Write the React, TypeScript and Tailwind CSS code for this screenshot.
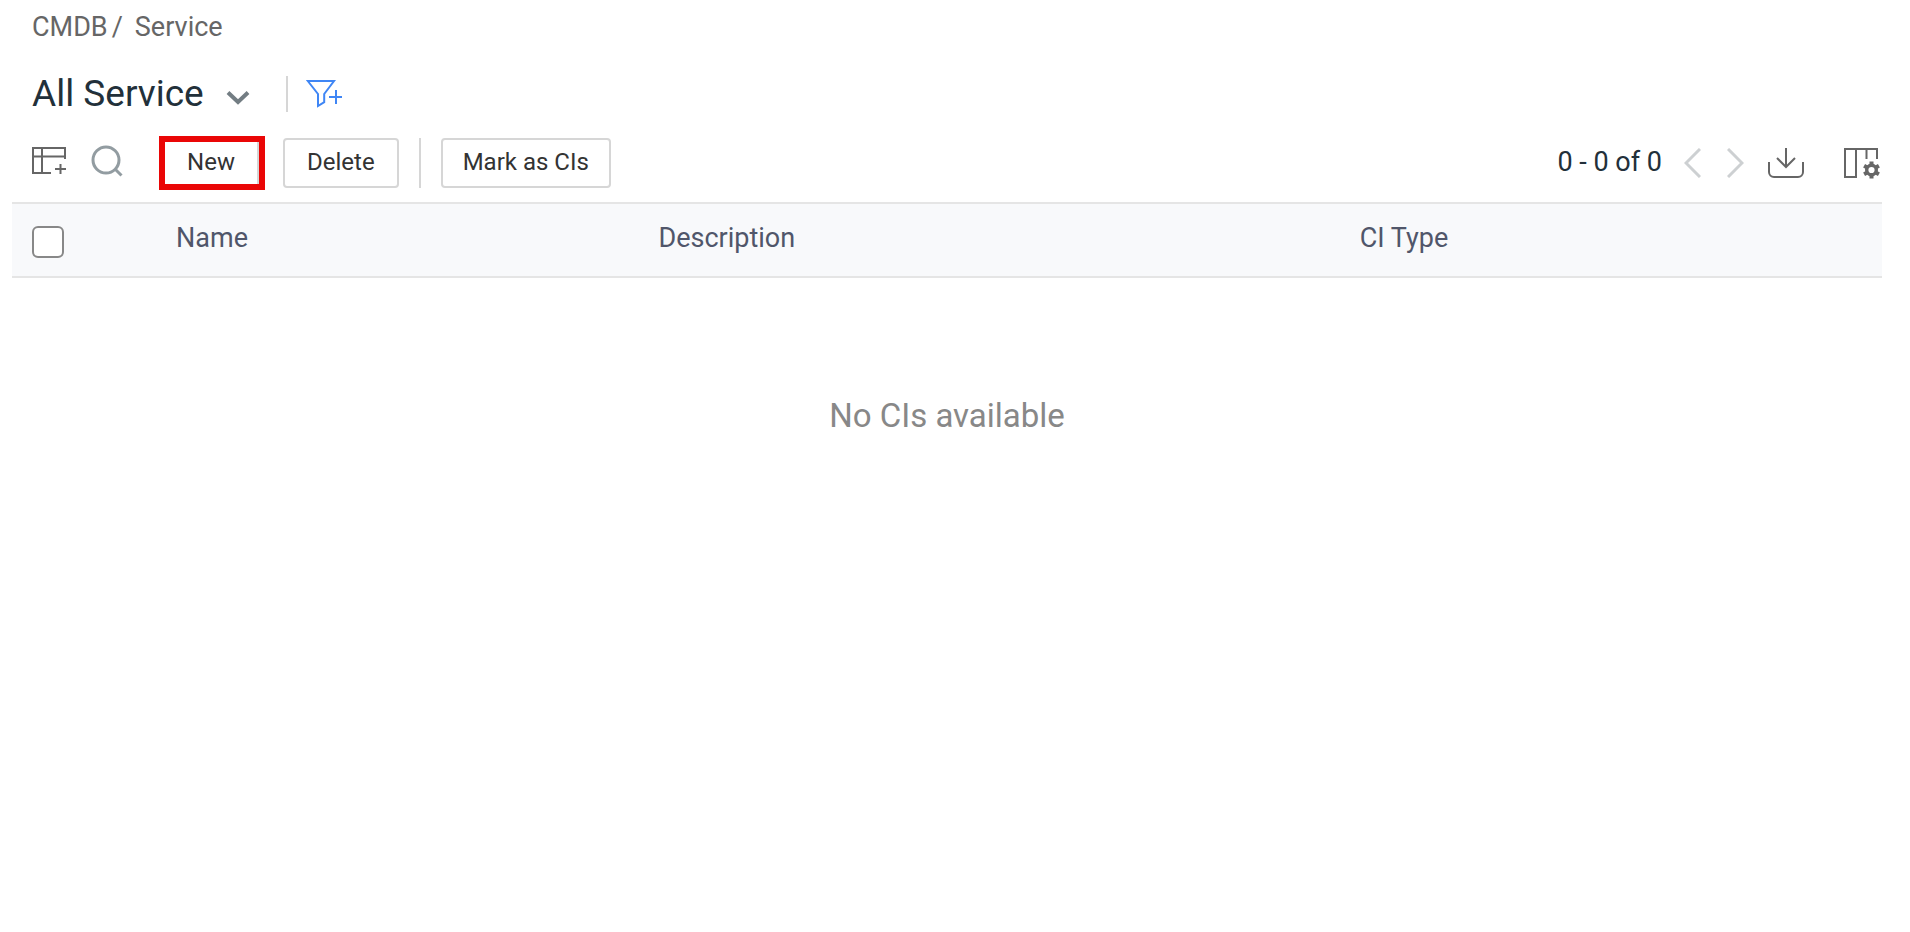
import type { ReactNode } from "react";

const FONT = "font-['Roboto','Liberation_Sans',sans-serif]";

function IconButton({ label, className = "", children }: { label: string; className?: string; children: ReactNode }) {
  return (
    <button type="button" aria-label={label} className={`block shrink-0 ${className}`}>
      {children}
    </button>
  );
}

function ChevronDownIcon() {
  return (
    <svg width="24" height="16" viewBox="0 0 24 16" fill="none" stroke="#737d83" strokeWidth="4">
      <path d="M2 2.5 12 12 22 2.5" />
    </svg>
  );
}

function FilterAddIcon() {
  return (
    <svg width="36" height="30" viewBox="0 0 36 30" fill="none" stroke="#3f86f5" strokeWidth="2">
      <path d="M1.8 2H28L18.2 15v8.2L12 27V15Z" />
      <path d="M23 18h13M30 11v14" />
    </svg>
  );
}

function TableAddIcon() {
  return (
    <svg width="34" height="28" viewBox="0 0 34 28" fill="none" stroke="#666" strokeWidth="2">
      <path d="M19 26H1V1H33V12M1 9.5H33M10 1V26" />
      <path d="M23 22h11M28.5 17v10" />
    </svg>
  );
}

function SearchIcon() {
  return (
    <svg width="32" height="32" viewBox="0 0 32 32" fill="none" stroke="#929ca1" strokeWidth="3">
      <circle cx="15" cy="15" r="13" />
      <path d="M24 24l6.5 6.5" />
    </svg>
  );
}

function DownloadIcon() {
  return (
    <svg width="36" height="30" viewBox="0 0 36 30" fill="none" stroke="#666" strokeWidth="2">
      <path d="M18 0v18.5M9 10l9 9 9-9" />
      <path d="M1 14v10a5 5 0 0 0 5 5h24a5 5 0 0 0 5-5V14" />
    </svg>
  );
}

function ColumnSettingsIcon() {
  return (
    <svg width="36" height="31" viewBox="0 0 36 31" fill="none" stroke="#666" strokeWidth="2">
      <path d="M12 1H1V29H12ZM12 1H33V11M22.5 1V11" />
      <circle cx="27.5" cy="22" r="4.8" strokeWidth="3.4" />
      <path
        d="M27.5 13.5v3M27.5 27.5v3M20.1 17.8l2.7 1.5M32.2 24.8l2.7 1.5M20.1 26.300l2.7-1.5M32.2 19.3l2.7-1.5"
        strokeWidth="4"
      />
    </svg>
  );
}

export default function App() {
  return (
    <main className={`${FONT} bg-white pl-3 pr-7 text-[#22303a]`}>
      {/* Breadcrumb */}
      <nav aria-label="Breadcrumb" className="flex h-14 items-center pl-5 pb-0.5 text-[27px] leading-8 text-[#666]">
        <a href="#cmdb">CMDB</a>
        <span className="pl-1 pr-3">/</span>
        <a href="#service">Service</a>
      </nav>

      {/* View title */}
      <div className="flex h-20 items-center pl-5 pb-1">
        <h1 className="text-[37px] leading-10">All Service</h1>
        <IconButton label="Change view" className="ml-[22px] pt-2">
          <ChevronDownIcon />
        </IconButton>
        <div className="ml-9 h-9 w-0.5 bg-[#d6d6d6]" />
        <IconButton label="Add filter" className="ml-[18px]">
          <FilterAddIcon />
        </IconButton>
      </div>

      {/* Toolbar */}
      <div className="flex h-[66px] items-center justify-between pb-3 pl-5">
        <div className="flex items-center text-2xl leading-8 text-[#333]">
          <IconButton label="Table view" className="pb-1">
            <TableAddIcon />
          </IconButton>
          <IconButton label="Search" className="ml-[25px] pb-1">
            <SearchIcon />
          </IconButton>
          <div className="ml-9 border-6 border-[#ea0606]">
            <button type="button" className="block h-[42px] w-[94px] border-r-2 border-[#d6d6d6] pb-0.5">
              New
            </button>
          </div>
          <button type="button" className="ml-[18px] h-[50px] rounded border-2 border-[#d6d6d6] px-[22px] pb-0.5">
            Delete
          </button>
          <div className="ml-5 h-[50px] w-0.5 bg-[#d6d6d6]" />
          <button type="button" className="ml-5 h-[50px] rounded border-2 border-[#d6d6d6] px-5 pb-0.5">
            Mark as CIs
          </button>
        </div>

        <div className="flex items-center">
          <span className="pb-0.5 text-[27px] leading-8">0 - 0 of 0</span>
          <IconButton label="Previous page" className="ml-[22px]">
            <svg width="17" height="30" viewBox="0 0 17 30" fill="none" stroke="#cdd0d2" strokeWidth="3">
              <path d="M16 1 2 15 16 29" />
            </svg>
          </IconButton>
          <IconButton label="Next page" className="ml-[26px]">
            <svg width="17" height="30" viewBox="0 0 17 30" fill="none" stroke="#cdd0d2" strokeWidth="3">
              <path d="M1 1 15 15 1 29" />
            </svg>
          </IconButton>
          <IconButton label="Export" className="ml-6">
            <DownloadIcon />
          </IconButton>
          <IconButton label="Column settings" className="ml-10 mr-0.5">
            <ColumnSettingsIcon />
          </IconButton>
        </div>
      </div>

      <table className="w-full table-fixed border-collapse">
        <colgroup>
          <col className="w-[164px]" />
          <col className="w-[25.8%]" />
          <col className="w-[37.5%]" />
          <col />
        </colgroup>
        <thead>
          <tr className="h-[74px] border-y-2 border-[#e5e5e5] bg-[#f8f9fb] text-left text-[27px] leading-8 text-[#50566a]">
            <th className="pl-5">
              <input
                type="checkbox"
                aria-label="Select all"
                className="mt-1 block size-8 appearance-none rounded-md border-2 border-[#888] bg-white"
              />
            </th>
            <th className="pb-1 font-normal">Name</th>
            <th className="pb-1 font-normal">Description</th>
            <th className="pb-1 font-normal">CI Type</th>
          </tr>
        </thead>
        <tbody>
          <tr>
            <td colSpan={4} className="pt-[118px] text-center text-[33px] leading-10 text-[#888]">
              No CIs available
            </td>
          </tr>
        </tbody>
      </table>
    </main>
  );
}
